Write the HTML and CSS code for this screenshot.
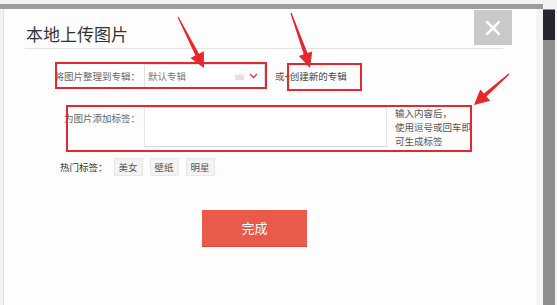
FILE: index.html
```html
<html>
  <head>
    <meta charset="utf-8">
    <link rel="stylesheet" href="styles.css">
  </head>
  <body>
    <div class="screen">
      <div class="topbar"></div>
      <div class="band"></div>
      <div class="stage">
        <div class="edge"></div>
        <div class="dialog">
          <div class="dlg-head">
            <div class="dlg-title">本地上传图片</div>
            <div class="dlg-close">
              <svg width="14" height="14" viewBox="0 0 14 14">
                <path d="M1 1 L13 13 M13 1 L1 13" stroke="#fff" stroke-width="2.6" stroke-linecap="square"/>
              </svg>
            </div>
          </div>
          <div class="dlg-rule"></div>

          <div class="field row1">
            <div class="lbl">将图片整理到专辑：</div>
            <div class="select">
              <span class="sel-text">默认专辑</span>
              <svg class="sel-lock" width="9" height="7" viewBox="0 0 9 7">
                <rect x="0" y="2" width="9" height="5" fill="#e2e2e2"/>
                <path d="M4 2 V1 Q4 0 5.5 0 Q7 0 7 1.5" stroke="#e2e2e2" fill="none"/>
              </svg>
              <svg class="sel-arrow" width="9" height="6" viewBox="0 0 9 6">
                <polyline points="1,1 4.5,4.5 8,1" stroke="#d8363a" stroke-width="1.3" fill="none"/>
              </svg>
            </div>
            <span class="or">或</span>
            <span class="create">+创建新的专辑</span>
          </div>

          <div class="field row2">
            <div class="lbl lbl-top">为图片添加标签：</div>
            <div class="tag-input"></div>
            <div class="hint">输入内容后，<br>使用逗号或回车即<br>可生成标签</div>
          </div>

          <div class="hot">
            <span class="hot-lbl">热门标签：</span>
            <span class="tag">美女</span>
            <span class="tag">壁纸</span>
            <span class="tag">明星</span>
          </div>

          <div class="btn-done">完成</div>
        </div>
        <div class="gutter"></div>
        <div class="scroll"><div class="scroll-top"></div></div>
      </div>
    </div>

    <svg class="marks" width="557" height="305" viewBox="0 0 557 305">
      <rect x="56" y="63" width="210" height="25" fill="none" stroke="#e5282e" stroke-width="2"/>
      <rect x="288" y="64" width="73" height="26" fill="none" stroke="#e5282e" stroke-width="2"/>
      <rect x="67" y="106" width="404" height="45" fill="none" stroke="#e5282e" stroke-width="2"/>
      <polygon fill="#e5282e" points="177.5,17.3 195.4,55.5 190.5,58 204,68 203.9,51.2 199,53.7 178.5,16.7"/>
      <polygon fill="#e5282e" points="290.4,13.2 303.7,54.3 298.9,55.9 310,68 312.2,51.5 307.5,53.1 291.6,12.8"/>
      <polygon fill="#e5282e" points="508.6,73.6 483.9,93.6 480.2,89.5 474,105 490.2,100.7 486.5,96.6 509.4,74.4"/>
    </svg>
  </body>
</html>
```

FILE: styles.css
```css
body {
  margin: 0;
  width: 557px;
  height: 305px;
  overflow: hidden;
  position: relative;
  background: #f2f2f2;
  font-family: "Noto Sans CJK SC", "Liberation Sans", sans-serif;
}

.screen {
  display: flex;
  flex-direction: column;
  height: 305px;
}

.topbar {
  height: 4px;
}

.band {
  height: 5px;
  width: 543px;
  background: #9c9c9c;
}

.stage {
  flex: 1;
  display: flex;
}

.edge {
  width: 3px;
}

.dialog {
  width: 532px;
  background: #fdfdfd;
  border-left: 1px solid #e2e2e2;
}

.gutter {
  width: 7px;
  background: #f4f4f4;
}

.scroll {
  width: 12px;
  background: #8d8d8d;
}

.scroll-top {
  margin-top: 1px;
  height: 30px;
  background: #262630;
}

/* header */
.dlg-head {
  display: flex;
  justify-content: space-between;
  align-items: flex-start;
  height: 39px;
  padding-left: 22px;
  padding-right: 24px;
}

.dlg-title {
  margin-top: 15px;
  font-size: 17px;
  line-height: 20px;
  color: #333;
}

.dlg-close {
  margin-top: 1px;
  width: 38px;
  height: 35px;
  background: #c9c9c9;
  display: flex;
  align-items: center;
  justify-content: center;
}

.dlg-rule {
  margin: 0 33px 0 21px;
  border-top: 1px solid #e3e3e3;
}

/* form rows */
.field {
  display: flex;
  align-items: flex-start;
  padding-left: 36px;
}

.lbl {
  width: 100px;
  margin-right: 4px;
  text-align: right;
  font-size: 9.5px;
  line-height: 24px;
  color: #666;
  white-space: nowrap;
}

.lbl-top {
  line-height: 14px;
  padding-top: 4px;
}

.row1 {
  margin-top: 15px;
  height: 24px;
}

.select {
  width: 121px;
  height: 24px;
  box-sizing: border-box;
  border: 1px solid #e2e2e2;
  background: #fff;
  display: flex;
  align-items: center;
  padding: 0 6px 0 3px;
}

.sel-text {
  flex: 1;
  font-size: 9.5px;
  color: #777;
}

.sel-lock {
  margin-right: 5px;
}

.or {
  margin-left: 10px;
  font-size: 9.5px;
  line-height: 24px;
  color: #555;
}

.create {
  font-size: 9.5px;
  line-height: 24px;
  color: #444;
}

.row2 {
  margin-top: 19px;
}

.tag-input {
  width: 243px;
  height: 40px;
  box-sizing: border-box;
  border: 1px solid #e6e6e6;
  border-bottom-color: #d6dbe8;
  background: #fff;
}

.hint {
  margin-left: 8px;
  font-size: 9.5px;
  line-height: 13.8px;
  color: #555;
  white-space: nowrap;
}

.hot {
  margin-top: 10px;
  padding-left: 56px;
  display: flex;
  align-items: center;
  height: 18px;
}

.hot-lbl {
  font-size: 9.5px;
  color: #333;
  margin-right: 6px;
}

.tag {
  height: 18px;
  box-sizing: border-box;
  padding: 0 4px;
  margin-right: 7px;
  border: 1px solid #e8e8e8;
  background: #f3f3f3;
  font-size: 9.5px;
  line-height: 16px;
  color: #555;
}

.btn-done {
  margin: 34px 0 0 198px;
  width: 105px;
  height: 37px;
  background: #ea5a4b;
  border-bottom: 1px solid #d9483b;
  box-sizing: border-box;
  color: #fff;
  font-size: 13px;
  line-height: 36px;
  text-align: center;
}

.marks {
  position: absolute;
  left: 0;
  top: 0;
  pointer-events: none;
}
```
